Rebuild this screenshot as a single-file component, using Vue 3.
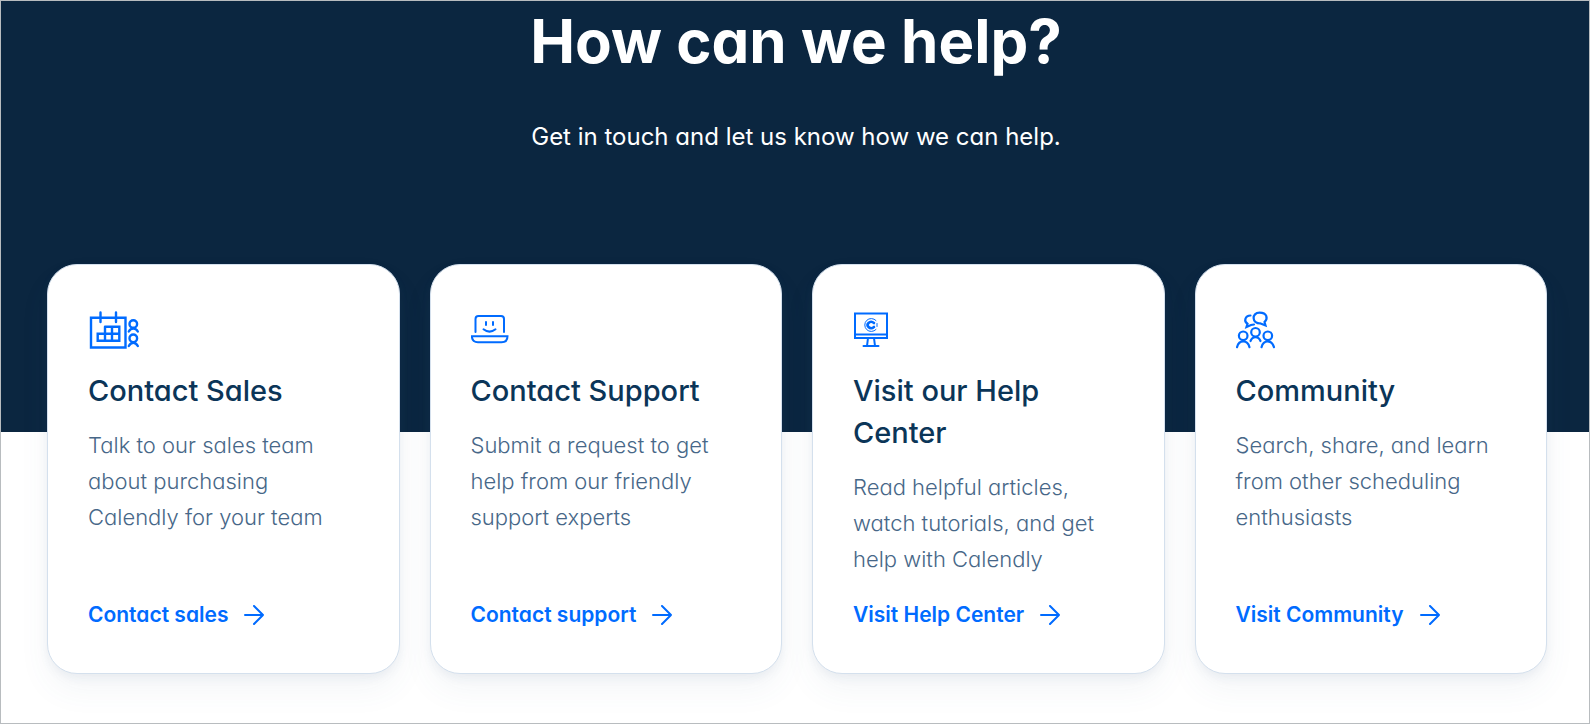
<script setup>
const cards = [
  {
    icon: 'sales',
    title: 'Contact Sales',
    text: 'Talk to our sales team about purchasing Calendly for your team',
    link: 'Contact sales',
  },
  {
    icon: 'support',
    title: 'Contact Support',
    text: 'Submit a request to get help from our friendly support experts',
    link: 'Contact support',
  },
  {
    icon: 'help',
    title: 'Visit our Help Center',
    text: 'Read helpful articles, watch tutorials, and get help with Calendly',
    link: 'Visit Help Center',
  },
  {
    icon: 'community',
    title: 'Community',
    text: 'Search, share, and learn from other scheduling enthusiasts',
    link: 'Visit Community',
  },
]
</script>

<template>
  <main class="page">
    <header class="hero">
      <h1>How can we help?</h1>
      <p>Get in touch and let us know how we can help.</p>
    </header>

    <section class="cards">
      <article v-for="card in cards" :key="card.icon" class="card">
        <!-- calendar with two people -->
        <svg v-if="card.icon === 'sales'" class="icon" viewBox="0 0 52 48" aria-hidden="true">
          <path d="M3 12.700H37.500V42.500H3ZM12.500 7.500V17M28 7.500V17" />
          <path d="M17 21.700H31.300V35.700H9.700V28.700H31.300M17 21.700V35.700M24 21.700V35.700" />
          <circle cx="45.300" cy="19" r="3.800" />
          <path d="M40.800 26.500Q42.500 23.500 45.300 23.500T49.800 26.500" />
          <circle cx="45.300" cy="33.300" r="3.800" />
          <path d="M40.800 41Q42.500 37.800 45.300 37.800T49.800 41" />
        </svg>
        <!-- smiling laptop -->
        <svg v-else-if="card.icon === 'support'" class="icon thin" viewBox="0 0 52 48" aria-hidden="true">
          <path d="M4.500 27V14Q4.500 11 7.500 11H30Q33 11 33 14V27" />
          <path d="M0.900 31.300H36.500Q36.500 37.300 30.500 37.300H7Q0.900 37.300 0.900 31.300Z" />
          <path d="M15 17V20M22 17V20M12.500 24.300Q18.500 29 24.500 24.300" />
        </svg>
        <!-- monitor with a round logo -->
        <svg v-else-if="card.icon === 'help'" class="icon thin" viewBox="0 0 52 48" aria-hidden="true">
          <path d="M2 8.500H34V33H2ZM2 29.500H34M15 33L14 41M21 33L22 41M10.500 41H25.500" />
          <path class="ring" d="M23 15.500A6.500 6.500 0 1 0 23 24.500" />
          <path class="ring" d="M24 18.500V21.500" />
          <path class="logo" d="M21 18Q18 15.500 15.500 18Q13.500 20 15.500 22Q18 24.500 21 22" />
        </svg>
        <!-- three people talking -->
        <svg v-else class="icon people" viewBox="0 0 52 48" aria-hidden="true">
          <path d="M24.500 18.500C15.500 18.500 15.500 7.700 23.500 7.700C31.500 7.700 32 14 28.500 17L29.500 20.500L24.500 18.500" />
          <path d="M14.500 10.500C9 10.500 7.500 16.500 11.500 18.800L10.500 22L15 20L18 19.500" />
          <circle cx="19.500" cy="27.300" r="4.300" />
          <circle cx="7.200" cy="30.800" r="4.300" />
          <circle cx="31.800" cy="30.800" r="4.300" />
          <path d="M14.500 36C16.500 31 22.500 31 24.500 36" />
          <path d="M1 42.200C3 34.500 11.500 34.500 13.500 42.200" />
          <path d="M25.500 42.200C27.500 34.500 36 34.500 38 42.200" />
        </svg>

        <h2>{{ card.title }}</h2>
        <p>{{ card.text }}</p>
        <a href="#">
          {{ card.link }}
          <svg class="arrow" viewBox="0 0 20 20" aria-hidden="true">
            <path d="M1 10H19M10 1L19 10L10 19" />
          </svg>
        </a>
      </article>
    </section>
  </main>
</template>

<style>
body {
  margin: 0;
  background: #fff;
}
</style>

<style scoped>
.page {
  min-height: 100vh;
  box-sizing: border-box;
  border: 1px solid #b8bcbf;
  font-family: Inter, "Open Sans", sans-serif;
  font-feature-settings: "cv11";
  color: #0b3558;
}

.hero {
  padding: 8px 22px 277px 24px;
  background: #0b2640;
  color: #fff;
  text-align: center;
}

h1 {
  margin: 0;
  font-size: 60px;
  font-weight: 700;
  line-height: 64px;
}

.hero p {
  margin: 46px 0 0;
  font-size: 24px;
  line-height: 36px;
}

.cards {
  display: grid;
  grid-template-columns: repeat(4, 1fr);
  gap: 30px;
  margin-top: -168px;
  padding: 0 42px 48px 46px;
}

.card {
  display: flex;
  flex-direction: column;
  align-items: flex-start;
  padding: 40px;
  background: #fff;
  border: 1px solid #d4e0ed;
  border-radius: 30px;
  box-shadow: 0 16px 32px rgba(71, 103, 136, 0.06), 0 4px 10px rgba(71, 103, 136, 0.08);
}

.icon {
  width: 52px;
  height: 48px;
  fill: none;
  stroke: #006bff;
  stroke-width: 2.4;
  stroke-linecap: round;
}

.thin {
  stroke-width: 2;
}

.people {
  stroke-width: 2.2;
}

.ring {
  stroke-width: 1;
}

.logo {
  stroke-width: 2.6;
}

h2 {
  margin: 17px 0 15px;
  font-size: 29px;
  font-weight: 550;
  line-height: 42px;
}

.card p {
  margin: 0 0 20px;
  color: #476788;
  font-size: 22px;
  font-weight: 300;
  line-height: 36px;
}

a {
  display: flex;
  align-items: center;
  gap: 16px;
  margin-top: auto;
  color: #006bff;
  font-size: 21px;
  font-weight: 600;
  line-height: 36px;
  text-decoration: none;
}

.arrow {
  width: 20px;
  height: 20px;
  fill: none;
  stroke: currentColor;
  stroke-width: 2;
  stroke-linecap: round;
  stroke-linejoin: round;
}
</style>
